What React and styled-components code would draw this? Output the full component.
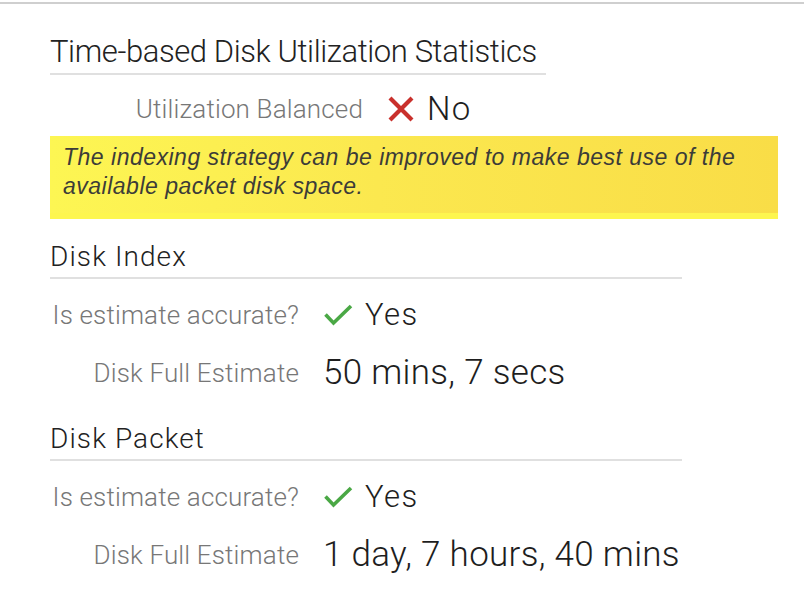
import * as React from "react";
import styled, { createGlobalStyle } from "styled-components";

const GlobalStyle = createGlobalStyle`
  html, body {
    margin: 0;
    padding: 0;
    background: #fff;
  }
  body {
    font-family: Roboto, "Liberation Sans", sans-serif;
    font-weight: 300;
  }
`;

const Page = styled.div`
  border-top: 2px solid #cfcfcf;
  margin-top: 2px;
  padding: 30px 0 0 50px;
  box-sizing: border-box;
  width: 804px;
  height: 598px;
`;

const Heading = styled.h2`
  margin: 0;
  width: ${({ width }) => width}px;
  font-size: ${({ size }) => size}px;
  line-height: ${({ lh }) => lh}px;
  letter-spacing: ${({ spacing }) => spacing}px;
  font-weight: 300;
  color: #222;
  padding-bottom: ${({ pad }) => pad}px;
  border-bottom: 2px solid #e0e0e0;
  white-space: nowrap;
`;

const Rows = styled.div`
  display: grid;
  grid-template-columns: ${({ labelWidth }) => labelWidth}px auto;
  column-gap: 24px;
  row-gap: 18px;
  align-items: center;
  margin-top: ${({ top }) => top}px;
`;

const Label = styled.div`
  text-align: right;
  font-size: 26px;
  line-height: 40px;
  letter-spacing: 0.15px;
  color: #777;
  white-space: nowrap;
`;

const Value = styled.div`
  display: flex;
  align-items: center;
  gap: 12px;
  font-size: ${({ size }) => size}px;
  letter-spacing: ${({ spacing }) => spacing}px;
  line-height: 40px;
  color: #1e1e1e;
  white-space: nowrap;
`;

const Notice = styled.div`
  margin-top: 7px;
  width: 728px;
  box-sizing: border-box;
  padding: 7px 13px 12px;
  background: linear-gradient(to right, #fdf653, #fbe84f 45%, #f9dd47);
  border-bottom: 6px solid #fdf64f;
  font-family: "Liberation Sans", Arial, sans-serif;
  font-weight: 400;
  font-style: italic;
  font-size: 23px;
  line-height: 29px;
  letter-spacing: 0.5px;
  color: #3c3c38;
`;

const Section = styled.div`
  margin-top: ${({ top }) => top}px;
`;

const CrossIcon = () => (
  <svg width="28" height="26" viewBox="0 0 28 26">
    <path d="M3 2 L25 24 M25 2 L3 24" stroke="#c9302c" strokeWidth="4.2" />
  </svg>
);

const CheckIcon = () => (
  <svg width="30" height="22" viewBox="0 0 30 22">
    <path
      d="M2.5 10.5 L10.5 19 L28 2"
      stroke="#4aa845"
      strokeWidth="3.6"
      fill="none"
      strokeLinejoin="miter"
    />
  </svg>
);

const DiskSection = ({ title, accurate, estimate, top }) => (
  <Section top={top}>
    <Heading width={632} size={28} lh={32} spacing={1.1} pad={4}>
      {title}
    </Heading>
    <Rows labelWidth={249} top={16}>
      <Label>Is estimate accurate?</Label>
      <Value size={31} spacing={1.5}>
        {accurate ? <CheckIcon /> : <CrossIcon />}
        {accurate ? "Yes" : "No"}
      </Value>
      <Label>Disk Full Estimate</Label>
      <Value size={35} spacing={0.3}>
        {estimate}
      </Value>
    </Rows>
  </Section>
);

export default function App() {
  return (
    <>
      <GlobalStyle />
      <Page>
        <Heading width={496} size={31} lh={36} spacing={-0.4} pad={3}>
          Time-based Disk Utilization Statistics
        </Heading>
        <Rows labelWidth={313} top={14}>
          <Label>Utilization Balanced</Label>
          <Value size={33} spacing={1.3}>
            <CrossIcon />
            No
          </Value>
        </Rows>
        <Notice>
          The indexing strategy can be improved to make best use of the
          available packet disk space.
        </Notice>
        <DiskSection
          title="Disk Index"
          accurate
          estimate="50 mins, 7 secs"
          top={22}
        />
        <DiskSection
          title="Disk Packet"
          accurate
          estimate="1 day, 7 hours, 40 mins"
          top={30}
        />
      </Page>
    </>
  );
}
